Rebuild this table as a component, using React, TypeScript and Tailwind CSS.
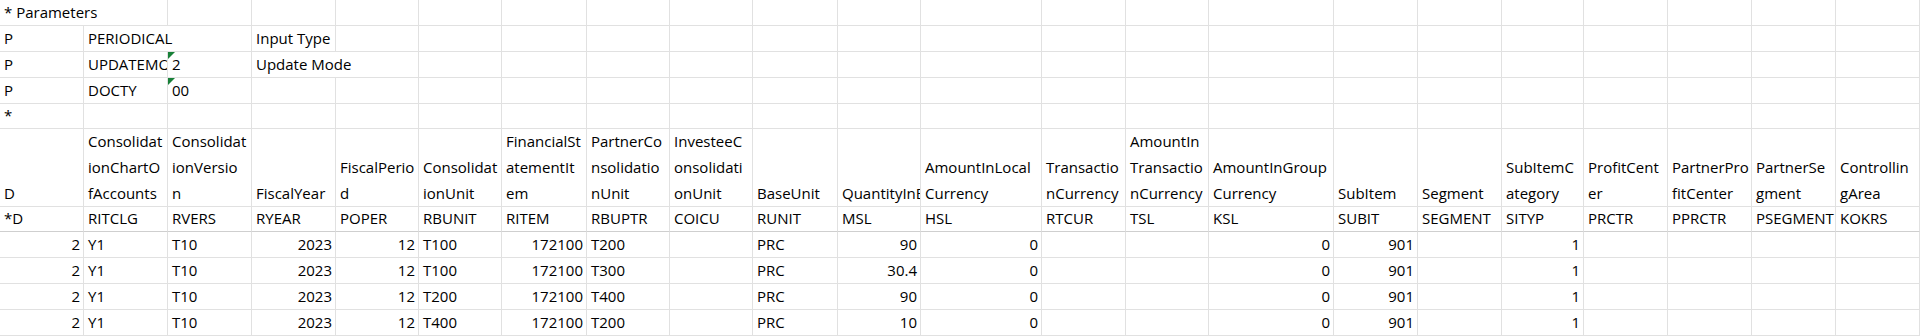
const FONT = "font-['Open_Sans','Noto_Sans',sans-serif]";

const header: string[][] = [
  ["D"],
  ["Consolidat", "ionChartO", "fAccounts"],
  ["Consolidat", "ionVersio", "n"],
  ["FiscalYear"],
  ["FiscalPerio", "d"],
  ["Consolidat", "ionUnit"],
  ["FinancialSt", "atementIt", "em"],
  ["PartnerCo", "nsolidatio", "nUnit"],
  ["InvesteeC", "onsolidati", "onUnit"],
  ["BaseUnit"],
  ["QuantityInBaseUnit"],
  ["AmountInLocal", "Currency"],
  ["Transactio", "nCurrency"],
  ["AmountIn", "Transactio", "nCurrency"],
  ["AmountInGroup", "Currency"],
  ["SubItem"],
  ["Segment"],
  ["SubItemC", "ategory"],
  ["ProfitCent", "er"],
  ["PartnerPro", "fitCenter"],
  ["PartnerSe", "gment"],
  ["Controllin", "gArea"],
];

const codes = [
  "*D", "RITCLG", "RVERS", "RYEAR", "POPER", "RBUNIT", "RITEM", "RBUPTR", "COICU", "RUNIT", "MSL",
  "HSL", "RTCUR", "TSL", "KSL", "SUBIT", "SEGMENT", "SITYP", "PRCTR", "PPRCTR", "PSEGMENT", "KOKRS",
];

// columns holding numbers are right aligned
const numeric = [0, 3, 4, 6, 10, 11, 14, 15, 17];

const rows: string[][] = [
  ["2", "Y1", "T10", "2023", "12", "T100", "172100", "T200", "", "PRC", "90", "0", "", "", "0", "901", "", "1", "", "", "", ""],
  ["2", "Y1", "T10", "2023", "12", "T100", "172100", "T300", "", "PRC", "30.4", "0", "", "", "0", "901", "", "1", "", "", "", ""],
  ["2", "Y1", "T10", "2023", "12", "T200", "172100", "T400", "", "PRC", "90", "0", "", "", "0", "901", "", "1", "", "", "", ""],
  ["2", "Y1", "T10", "2023", "12", "T400", "172100", "T200", "", "PRC", "10", "0", "", "", "0", "901", "", "1", "", "", "", ""],
];

const cellBase =
  "relative flex items-end overflow-hidden whitespace-nowrap border-r border-b border-[#e1e1e1] px-[4px] leading-[25px]";

function Cell({
  children,
  span,
  right,
  flag,
  extra,
}: {
  children?: React.ReactNode;
  span?: boolean;
  right?: boolean;
  flag?: boolean;
  extra?: string;
}) {
  return (
    <div
      className={`${cellBase} ${span ? "col-span-2" : ""} ${right ? "justify-end pr-[3px]" : ""} ${
        extra ?? ""
      }`}
    >
      {flag && (
        <span className="absolute top-0 left-0 h-0 w-0 border-t-[7px] border-r-[7px] border-t-[#188038] border-r-transparent" />
      )}
      <span>{children}</span>
    </div>
  );
}

function Empty({ n, extra }: { n: number; extra?: string }) {
  return (
    <>
      {Array.from({ length: n }).map((_, i) => (
        <Cell key={i} extra={extra} />
      ))}
    </>
  );
}

export default function App() {
  return (
    <div className={`h-[336px] w-[1920px] overflow-hidden bg-white text-[15px] text-black ${FONT}`}>
      <div className="grid grid-cols-[84px_84px_84px_84px_83px_83px_85px_83px_83px_85px_83px_121px_84px_83px_125px_84px_84px_82px_84px_84px_84px_84px] grid-rows-[26px_26px_26px_26px_25px_78px_25px_26px_26px_26px_26px]">
        {/* parameter block */}
        <Cell span>* Parameters</Cell>
        <Empty n={20} />

        <Cell>P</Cell>
        <Cell span>PERIODICAL</Cell>
        <Cell>Input Type</Cell>
        <Empty n={18} />

        <Cell>P</Cell>
        <Cell>UPDATEMODE</Cell>
        <Cell flag>2</Cell>
        <Cell span>Update Mode</Cell>
        <Empty n={17} />

        <Cell>P</Cell>
        <Cell>DOCTY</Cell>
        <Cell flag>00</Cell>
        <Empty n={19} />

        <Cell>*</Cell>
        <Empty n={21} />

        {/* field descriptions */}
        {header.map((lines, i) => (
          <div
            key={i}
            className="flex flex-col justify-end overflow-hidden whitespace-nowrap border-r border-b border-[#e1e1e1] px-[4px]"
          >
            {lines.map((l, j) => (
              <div key={j} className="h-[26px] leading-[26px]">
                {l}
              </div>
            ))}
          </div>
        ))}

        {/* technical names */}
        {codes.map((c, i) => (
          <Cell key={i} extra="border-b-[#cfcfcf]">
            {c}
          </Cell>
        ))}

        {/* data */}
        {rows.map((r, ri) =>
          r.map((v, ci) => (
            <Cell key={`${ri}-${ci}`} right={numeric.includes(ci)}>
              {v}
            </Cell>
          )),
        )}
      </div>
    </div>
  );
}
